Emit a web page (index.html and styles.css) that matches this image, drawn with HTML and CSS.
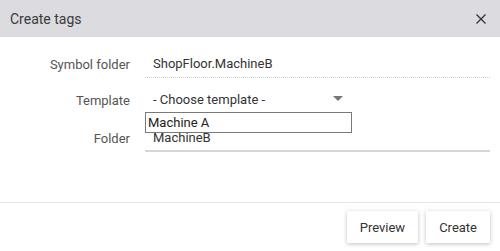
FILE: index.html
```html
<!DOCTYPE html>
<html>
<head>
<meta charset="utf-8">
<link rel="stylesheet" href="styles.css">
</head>
<body>
<div class="dialog">
  <div class="header">
    <span class="title">Create tags</span>
    <svg class="close" width="10" height="10" viewBox="0 0 10 10"><path d="M0.5 0.5L9.5 9.5M9.5 0.5L0.5 9.5" stroke="#333" stroke-width="1.3"/></svg>
  </div>
  <div class="content">
    <div class="row">
      <div class="label">Symbol folder</div>
      <div class="field readonly">ShopFloor.MachineB</div>
    </div>
    <div class="row">
      <div class="label">Template</div>
      <div class="field select">
        <span>- Choose template -</span>
        <span class="arrow"></span>
        <div class="list"><div class="option">Machine A</div></div>
      </div>
    </div>
    <div class="row third">
      <div class="label">Folder</div>
      <div class="field input">MachineB</div>
    </div>
  </div>
  <div class="footer">
    <button class="btn">Preview</button>
    <button class="btn">Create</button>
  </div>
</div>
</body>
</html>
```
FILE: styles.css
```css
html, body {
  margin: 0;
  padding: 0;
  background: #fff;
}
body {
  font-family: Roboto, "Liberation Sans", sans-serif;
  font-size: 13px;
  color: #333;
}
.dialog {
  width: 500px;
  height: 251px;
  display: flex;
  flex-direction: column;
}
.header {
  height: 37px;
  background: #dcdbe0;
  display: flex;
  align-items: center;
  justify-content: space-between;
  padding: 0 14px 0 10px;
  box-sizing: border-box;
}
.title {
  font-size: 14px;
  color: #3a3a3a;
}
.close {
  display: block;
}
.content {
  flex: 1;
  padding: 13px 10px 0 0;
  display: flex;
  flex-direction: column;
  gap: 8px;
}
.row {
  display: flex;
  align-items: stretch;
  height: 28px;
}
.row.third {
  margin-top: 2px;
}
.label {
  width: 145px;
  text-align: right;
  padding-right: 15px;
  box-sizing: border-box;
  display: flex;
  align-items: center;
  justify-content: flex-end;
  color: #555;
}
.field {
  flex: 1;
  display: flex;
  align-items: center;
  padding-left: 8px;
  box-sizing: border-box;
  color: #333;
}
.readonly {
  border-bottom: 1px dotted #c8c8c8;
}
.input {
  border-bottom: 2px solid #d6d6d6;
}
.select {
  flex: 0 0 207px;
  position: relative;
  border-bottom: 2px solid #1e88e5;
  justify-content: space-between;
  padding-right: 9px;
}
.arrow {
  width: 0;
  height: 0;
  border-left: 5px solid transparent;
  border-right: 5px solid transparent;
  border-top: 5px solid #777;
  margin-top: -2px;
}
.list {
  position: absolute;
  top: 100%;
  left: 0;
  right: 0;
  height: 21px;
  box-sizing: border-box;
  border: 1px solid #7a7a7a;
  background: #fff;
  display: flex;
  align-items: center;
  padding-left: 2px;
  color: #222;
}
.footer {
  height: 49px;
  border-top: 1px solid #e4e4e4;
  display: flex;
  justify-content: flex-end;
  align-items: flex-start;
  gap: 8px;
  padding: 8px 10px 0 0;
  box-sizing: border-box;
}
.btn {
  font-family: Roboto, "Liberation Sans", sans-serif;
  font-size: 13px;
  color: #333;
  background: #fff;
  border: none;
  height: 32px;
  padding: 0 13px;
  box-shadow: 0 1px 4px rgba(0,0,0,0.25);
  border-radius: 1px;
}
```
